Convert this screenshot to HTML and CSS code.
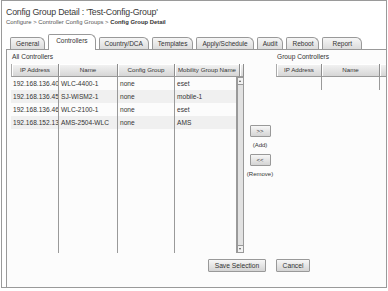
FILE: index.html
```html
<!DOCTYPE html>
<html lang="en">

<head>
    <meta charset="UTF-8">
    <title>Config Group Detail</title>
    <link rel="stylesheet" href="styles.css">
</head>

<body>
    <div class="frame">
        <!-- Page heading and breadcrumb -->
        <div class="head">
            <div class="title">Config Group Detail : 'Test-Config-Group'</div>
            <div class="crumbs">Configure &gt; Controller Config Groups &gt; <b>Config Group Detail</b></div>
        </div>

        <!-- Tab strip -->
        <div class="tabs">
            <div class="tab">General</div>
            <div class="tab on">Controllers</div>
            <div class="tab">Country/DCA</div>
            <div class="tab">Templates</div>
            <div class="tab">Apply/Schedule</div>
            <div class="tab">Audit</div>
            <div class="tab">Reboot</div>
            <div class="tab last">Report</div>
        </div>

        <div class="panel">
            <div class="lists">
                <!-- All controllers list -->
                <div class="block">
                    <div class="caption">All Controllers</div>
                    <div class="grid all">
                        <div class="th">IP Address</div>
                        <div class="th">Name</div>
                        <div class="th">Config Group</div>
                        <div class="th">Mobility Group Name</div>
                        <div class="th corner"></div>
                    </div>
                    <div class="body">
                        <div class="grid all rows">
                            <div class="td">192.168.136.40</div>
                            <div class="td">WLC-4400-1</div>
                            <div class="td">none</div>
                            <div class="td">eset</div>

                            <div class="td alt">192.168.136.45</div>
                            <div class="td alt">SJ-WISM2-1</div>
                            <div class="td alt">none</div>
                            <div class="td alt">mobile-1</div>

                            <div class="td">192.168.136.46</div>
                            <div class="td">WLC-2100-1</div>
                            <div class="td">none</div>
                            <div class="td">eset</div>

                            <div class="td alt">192.168.152.13</div>
                            <div class="td alt">AMS-2504-WLC</div>
                            <div class="td alt">none</div>
                            <div class="td alt">AMS</div>

                            <div class="td fill"></div>
                            <div class="td fill"></div>
                            <div class="td fill"></div>
                            <div class="td fill"></div>
                        </div>
                        <div class="scroll">
                            <span class="arrow up"></span>
                            <span class="arrow down"></span>
                        </div>
                    </div>
                </div>

                <!-- Add / remove buttons -->
                <div class="mover">
                    <button class="btn small">&gt;&gt;</button>
                    <div class="hint">(Add)</div>
                    <button class="btn small">&lt;&lt;</button>
                    <div class="hint">(Remove)</div>
                </div>

                <!-- Group controllers list -->
                <div class="block">
                    <div class="caption">Group Controllers</div>
                    <div class="grid group">
                        <div class="th">IP Address</div>
                        <div class="th">Name</div>
                        <div class="th"></div>
                    </div>
                    <div class="body">
                        <div class="grid group rows">
                            <div class="td fill"></div>
                            <div class="td fill"></div>
                            <div class="td fill"></div>
                        </div>
                    </div>
                </div>
            </div>

            <div class="actions">
                <button class="btn save">Save Selection</button>
                <button class="btn cancel">Cancel</button>
            </div>
        </div>
    </div>
</body>

</html>
```

FILE: styles.css
```css
body {
    margin: 0;
    background: #fff;
    color: #333;
    font-family: "Liberation Sans", Arial, sans-serif;
}

/* Outer frame, clips the right side of the page */
.frame {
    margin-left: 1px;
    width: 384px;
    height: 286px;
    border: 1px solid #9a9a9a;
    overflow: hidden;
    display: flex;
    flex-direction: column;
}

.head {
    height: 28px;
    padding: 5px 0 0 4px;
}

.title {
    font-size: 8.8px;
    letter-spacing: -0.2px;
    line-height: 12px;
    color: #3a3a3a;
}

.crumbs {
    font-size: 5.9px;
    line-height: 9px;
    color: #555;
}

.crumbs b {
    color: #333;
}

/* Tabs */
.tabs {
    display: flex;
    align-items: flex-end;
    gap: 3px;
    height: 15px;
    padding-left: 8px;
}

.tab {
    height: 11px;
    padding: 0 5px;
    border: 1px solid #999;
    border-bottom: none;
    border-radius: 2px 6px 0 0;
    background: linear-gradient(#f6f6f6, #dcdcdc);
    font-size: 6.5px;
    line-height: 11px;
    color: #333;
    white-space: nowrap;
}

.tab.on {
    position: relative;
    z-index: 1;
    height: 15px;
    margin-bottom: -1px;
    padding: 0 7px;
    background: #fff;
    line-height: 12px;
}

.tab.last {
    padding: 0 9px;
}

/* Tab body */
.panel {
    flex: 1;
    margin-left: 4px;
    border-top: 1px solid #999;
    border-left: 1px solid #999;
    background: #fcfcfc;
    padding-left: 4px;
}

.lists {
    display: flex;
    align-items: flex-start;
}

.caption {
    height: 14px;
    font-size: 6.6px;
    line-height: 14px;
    padding-left: 1px;
}

.grid {
    display: grid;
}

.grid.all {
    grid-template-columns: 48px 59px 57px 65px 4px;
}

.grid.all.rows {
    grid-template-columns: 48px 59px 57px 62px;
}

.grid.group {
    grid-template-columns: 46px 58px 80px;
}

.rows {
    grid-template-rows: repeat(4, 13px) 1fr;
    width: 100%;
}

.th {
    height: 12px;
    border-right: 1px solid #8e8e8e;
    border-bottom: 1px solid #9a9a9a;
    box-shadow: inset 1px 1px #fff;
    background: linear-gradient(#f4f4f4, #d6d6d6);
    font-size: 6.2px;
    line-height: 12px;
    text-align: center;
    white-space: nowrap;
    overflow: hidden;
}

.th:first-child {
    border-left: 1px solid #aaa;
}

.body {
    display: flex;
    height: 176px;
}

.td {
    border-right: 1px solid #9a9a9a;
    padding-left: 2px;
    font-size: 6.6px;
    line-height: 13px;
    white-space: nowrap;
    overflow: hidden;
}

.td.alt {
    background: #f0f0f0;
}

/* Scrollbar of the left list */
.scroll {
    flex: none;
    display: flex;
    flex-direction: column;
    justify-content: space-between;
    width: 5px;
    border: 1px solid #999;
    background: #e2e2e2;
}

.arrow {
    height: 6px;
    border-bottom: 1px solid #999;
    background: #f2f2f2;
    position: relative;
}

.arrow.down {
    border-bottom: none;
    border-top: 1px solid #999;
}

.arrow::after {
    content: "";
    position: absolute;
    left: 1px;
    top: 2px;
    border-left: 1.5px solid transparent;
    border-right: 1.5px solid transparent;
}

.arrow.up::after {
    border-bottom: 2px solid #555;
}

.arrow.down::after {
    border-top: 2px solid #555;
}

/* Middle column */
.mover {
    width: 32px;
    flex: none;
    display: flex;
    flex-direction: column;
    align-items: center;
    padding-top: 75px;
}

.btn {
    padding: 0;
    border: 1px solid #999;
    border-radius: 1px;
    background: linear-gradient(#f7f7f7, #d4d4d4);
    color: #333;
    font-family: inherit;
    font-size: 6.7px;
}

.btn.small {
    width: 21px;
    height: 12px;
    font-size: 6px;
}

.hint {
    margin: 4px 0;
    font-size: 6px;
    line-height: 9px;
    white-space: nowrap;
}

.actions {
    display: flex;
    gap: 10px;
    margin-top: 6px;
    padding-left: 197px;
}

.save {
    width: 58px;
    height: 13px;
}

.cancel {
    width: 34px;
    height: 13px;
}
```
